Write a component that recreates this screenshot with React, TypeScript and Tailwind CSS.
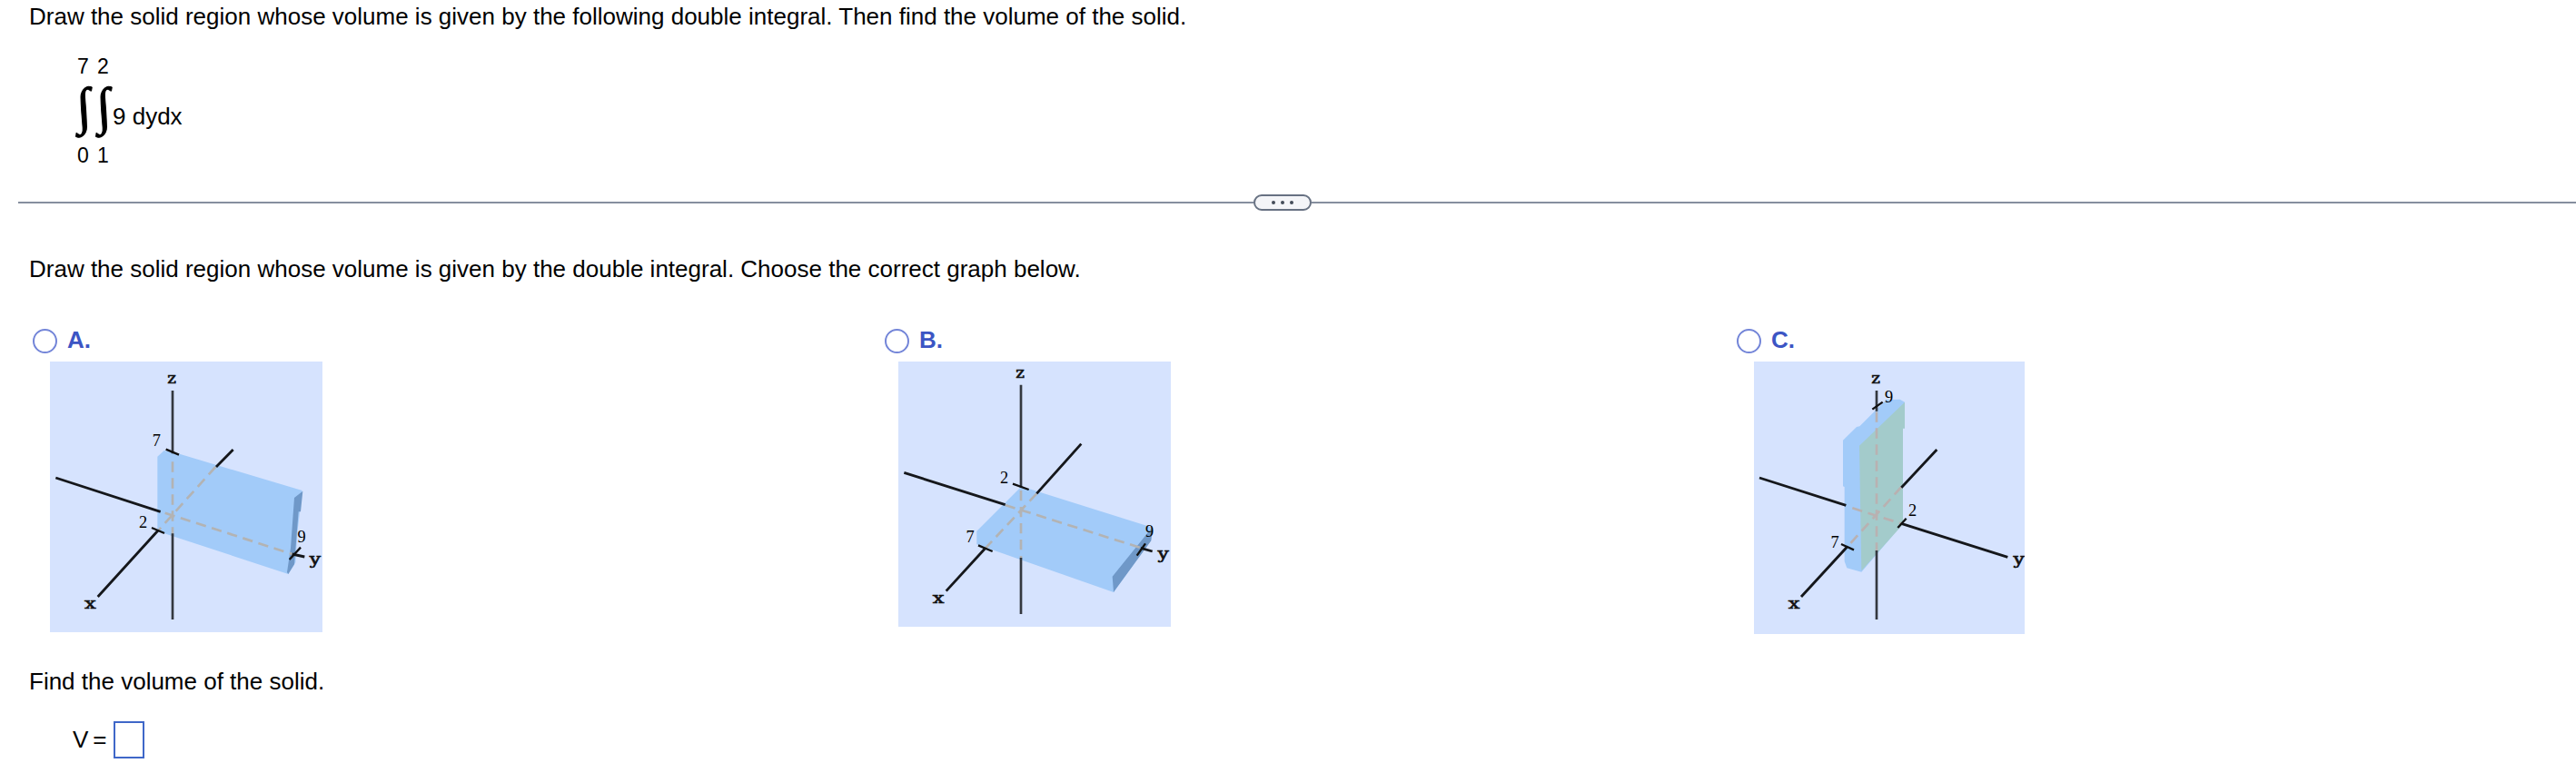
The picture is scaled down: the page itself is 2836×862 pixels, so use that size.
import type { ReactNode } from "react";

const FRONT = "#a2cbf9";
const SIDE = "#6f98c8";

type Point = [number, number];

function AxisLabel({ at, width, children }: { at: Point; width: number; children: string }) {
  return (
    <text
      x={at[0] - width / 2}
      y={at[1]}
      textLength={width}
      lengthAdjust="spacingAndGlyphs"
      fontSize="50"
      fill="#111"
      stroke="#111"
      strokeWidth="2"
      fontFamily='"DejaVu Serif", serif'
    >
      {children}
    </text>
  );
}

function TickLabel({ at, children }: { at: Point; children: string }) {
  return (
    <text x={at[0]} y={at[1]} textAnchor="middle" fontSize="55" fill="#000" fontFamily='"Liberation Serif", serif'>
      {children}
    </text>
  );
}

function Axes({ vertical, d, hidden, ticks, dash = "#b3b3b3" }: { vertical: string; d: string; hidden: string; ticks: string; dash?: string }) {
  return (
    <g fill="none">
      <path d={hidden} stroke={dash} strokeWidth="8" strokeDasharray="34 20" />
      <path d={vertical} stroke="#34383f" strokeWidth="8" />
      <path d={d} stroke="#15171b" strokeWidth="8.5" />
      <path d={ticks} stroke="#111" strokeWidth="7" />
    </g>
  );
}

function GraphA() {
  return (
    <svg className="block h-[298px] w-[300px] bg-[#d6e3fe]" viewBox="45 24 900 894">
      <polygon points="400,338 422,318 468,328 878,450 872,505 862,590 856,688 832,726 400,584" fill={FRONT} />
      <polygon points="852,474 880,452 873,520 866,520 852,694 832,726 828,720 840,640" fill={SIDE} />
      <Axes
        hidden="M450 355V600M592 372L405 580M425 524L845 660"
        vertical="M450 120V328M450 592V876"
        d="M64 408L410 520M650 315L594 372M402 582L203 801M845 660L886 669"
        ticks="M428 314L471 332M381 573L423 591M836 678L873 638"
      />
      <AxisLabel at={[447, 97]} width={29}>z</AxisLabel>
      <AxisLabel at={[178, 841]} width={38}>x</AxisLabel>
      <AxisLabel at={[921, 692]} width={37}>y</AxisLabel>
      <TickLabel at={[397, 304]}>7</TickLabel>
      <TickLabel at={[353, 574]}>2</TickLabel>
      <TickLabel at={[876, 622]}>9</TickLabel>
    </svg>
  );
}

function GraphB() {
  return (
    <svg className="block h-[292px] w-[300px] bg-[#d6e3fe]" viewBox="57 24 900 876">
      <polygon points="316,584 460,440 488,444 896,572 892,612 768,786 316,628" fill={FRONT} />
      <polygon points="764,734 882,588 896,572 892,616 772,780 768,786" fill={SIDE} />
      <Axes
        hidden="M462 450V674M514 460L345 640M410 498L860 640"
        vertical="M462 101V440M462 672V858"
        d="M76 391L410 497M661 296L514 460M343 642L215 782M858 640L896 651"
        ticks="M435 428L488 447M321 631L368 651M845 665L873 625"
      />
      <AxisLabel at={[459, 79]} width={29}>z</AxisLabel>
      <AxisLabel at={[189, 823]} width={38}>x</AxisLabel>
      <AxisLabel at={[932, 674]} width={37}>y</AxisLabel>
      <TickLabel at={[407, 425]}>2</TickLabel>
      <TickLabel at={[294, 622]}>7</TickLabel>
      <TickLabel at={[887, 603]}>9</TickLabel>
    </svg>
  );
}

function GraphC() {
  return (
    <svg className="block h-[300px] w-[298px] bg-[#d6e3fe]" viewBox="63 24 894 900">
      <polygon points="357,284 402,240 412,238 500,150 545,149 561,158 520,600 418,719 370,706 362,684 362,438 357,436" fill={FRONT} />
      <polygon points="411,302 561,158 561,245 555,245 555,562 418,715" fill="#a3cbcb" />
      <Axes
        dash="#b9b1b1"
        hidden="M468 190V650M550 438L375 632M388 508L552 560"
        vertical="M468 120V188M468 648V876"
        d="M81 408L367 499M667 315L550 440M370 637L219 801M552 560L901 670"
        ticks="M454 182L488 158M351 627L393 646M538 573L566 542"
      />
      <AxisLabel at={[465, 97]} width={29}>z</AxisLabel>
      <AxisLabel at={[195, 841]} width={38}>x</AxisLabel>
      <AxisLabel at={[938, 692]} width={37}>y</AxisLabel>
      <TickLabel at={[509, 160]}>9</TickLabel>
      <TickLabel at={[587, 533]}>2</TickLabel>
      <TickLabel at={[330, 640]}>7</TickLabel>
    </svg>
  );
}

function Choice({ letter, children }: { letter: string; children: ReactNode }) {
  return (
    <div className="w-[938px] shrink-0">
      <label className="mb-2 flex h-[30px] items-center gap-[11px]">
        <span className="size-[27px] rounded-full border-2 border-[#7385d8] bg-white" />
        <span className="pb-[2px] font-bold text-[#3c55c4]">{letter}.</span>
      </label>
      {children}
    </div>
  );
}

function Integral({ upper, lower }: { upper: string; lower: string }) {
  return (
    <div className="flex w-[22px] flex-col text-[23px] leading-[26px]">
      <span className="pl-[2px]">{upper}</span>
      <span className="flex h-[72px] -translate-x-[2px] -translate-y-[5px] skew-x-[4deg] items-center justify-center font-['Liberation_Serif',serif] text-[57px] leading-[72px] [-webkit-text-stroke:1px_black]">
        ∫
      </span>
      <span className="pl-[2px]">{lower}</span>
    </div>
  );
}

export default function App() {
  return (
    <main className="h-[862px] w-[2836px] overflow-hidden bg-white font-['Liberation_Sans',Arial,sans-serif] text-[26px] leading-[30px] text-black">
      <p className="pt-[3px] pl-8">Draw the solid region whose volume is given by the following double integral. Then find the volume of the solid.</p>

      <div className="mt-[27px] flex items-center pl-[83px]">
        <Integral upper="7" lower="0" />
        <Integral upper="2" lower="1" />
        <span className="mt-[12px] -ml-[3px]">9 dydx</span>
      </div>

      <div className="mt-[30px] ml-5 flex h-[18px] items-center">
        <div className="h-[2px] w-[1360px] bg-[#868f9f]" />
        <button className="flex h-[18px] w-16 items-center justify-center gap-[6px] rounded-[9px] border-2 border-[#677182] bg-[#f4f5f8]">
          <span className="size-1 rounded-full bg-[#444c59]" />
          <span className="size-1 rounded-full bg-[#444c59]" />
          <span className="size-1 rounded-full bg-[#444c59]" />
        </button>
        <div className="h-[2px] grow bg-[#868f9f]" />
      </div>

      <p className="mt-[49px] pl-8">Draw the solid region whose volume is given by the double integral. Choose the correct graph below.</p>

      <div className="mt-[49px] flex pl-9">
        <Choice letter="A">
          <div className="ml-[19px]"><GraphA /></div>
        </Choice>
        <Choice letter="B">
          <div className="ml-[15px]"><GraphB /></div>
        </Choice>
        <Choice letter="C">
          <div className="ml-[19px]"><GraphC /></div>
        </Choice>
      </div>

      <p className="mt-[37px] pl-8">Find the volume of the solid.</p>

      <div className="mt-[29px] flex items-center pl-20">
        <span className="flex gap-[5px] pb-[2px]">
          <span>V</span>
          <span>=</span>
        </span>
        <input className="ml-[7px] h-[41px] w-[34px] border-2 border-[#3f67c8]" />
      </div>
    </main>
  );
}
